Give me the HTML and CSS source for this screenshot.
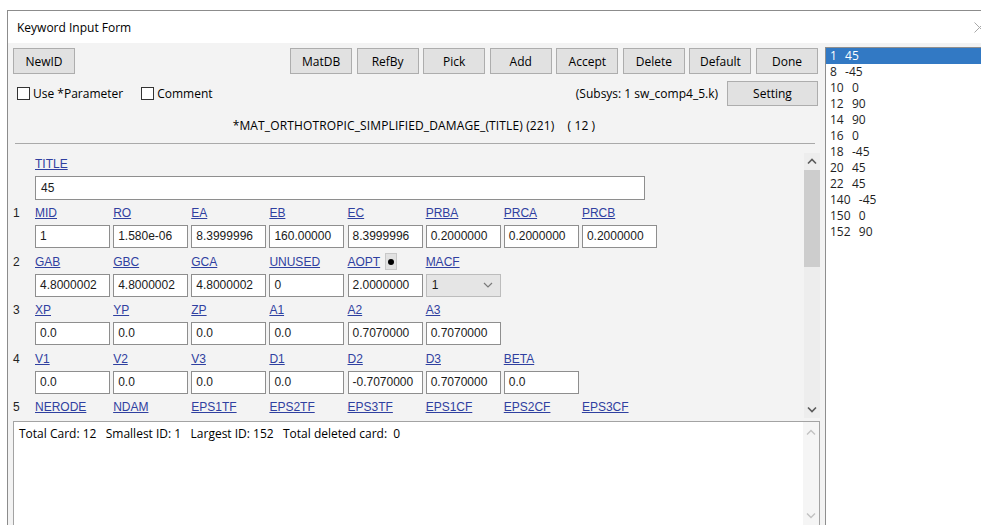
FILE: index.html
```html
<!DOCTYPE html>
<html lang="en">
<head>
<meta charset="utf-8">
<title>Keyword Input Form</title>
<link rel="stylesheet" href="styles.css">
</head>
<body>
<div class="window">
  <div class="titlebar">
    <span class="title">Keyword Input Form</span>
    <svg class="close" width="11" height="11" viewBox="0 0 11 11"><path d="M0.5 0.5 L10.5 10.5 M10.5 0.5 L0.5 10.5" stroke="#a8a8a8" stroke-width="1" fill="none"/></svg>
  </div>
  <div class="body">
    <div class="main">
      <div class="toolbar">
        <button class="btn">NewID</button>
        <div class="tools">
          <button class="btn">MatDB</button>
          <button class="btn">RefBy</button>
          <button class="btn">Pick</button>
          <button class="btn">Add</button>
          <button class="btn">Accept</button>
          <button class="btn">Delete</button>
          <button class="btn">Default</button>
          <button class="btn">Done</button>
        </div>
      </div>
      <div class="optrow">
        <label class="check"><span class="box"></span>Use *Parameter</label>
        <label class="check"><span class="box"></span>Comment</label>
        <span class="subsys">(Subsys: 1 sw_comp4_5.k)</span>
        <button class="btn btn-setting">Setting</button>
      </div>
      <div class="kwtitle">*MAT_ORTHOTROPIC_SIMPLIFIED_DAMAGE_(TITLE) (221)&nbsp;&nbsp;&nbsp;&nbsp;( 12 )</div>
      <div class="sep"></div>

      <div class="cards">
        <div class="cards-body">
          <div class="title-block">
            <div class="lbl">TITLE</div>
            <div class="input title-input">45</div>
          </div>

          <div class="card">
            <div class="num">1</div>
            <div class="fields">
              <div class="field"><div class="lbl">MID</div><div class="input">1</div></div>
              <div class="field"><div class="lbl">RO</div><div class="input">1.580e-06</div></div>
              <div class="field"><div class="lbl">EA</div><div class="input">8.3999996</div></div>
              <div class="field"><div class="lbl">EB</div><div class="input">160.00000</div></div>
              <div class="field"><div class="lbl">EC</div><div class="input">8.3999996</div></div>
              <div class="field"><div class="lbl">PRBA</div><div class="input">0.2000000</div></div>
              <div class="field"><div class="lbl">PRCA</div><div class="input">0.2000000</div></div>
              <div class="field"><div class="lbl">PRCB</div><div class="input">0.2000000</div></div>
            </div>
          </div>

          <div class="card">
            <div class="num">2</div>
            <div class="fields">
              <div class="field"><div class="lbl">GAB</div><div class="input">4.8000002</div></div>
              <div class="field"><div class="lbl">GBC</div><div class="input">4.8000002</div></div>
              <div class="field"><div class="lbl">GCA</div><div class="input">4.8000002</div></div>
              <div class="field"><div class="lbl">UNUSED</div><div class="input">0</div></div>
              <div class="field">
                <div class="lbl-row"><span class="lbl">AOPT</span><span class="mini"><span class="dot"></span></span></div>
                <div class="input">2.0000000</div>
              </div>
              <div class="field">
                <div class="lbl">MACF</div>
                <div class="select"><span>1</span><svg width="10" height="6" viewBox="0 0 10 6"><path d="M1 1 L5 5 L9 1" stroke="#7a7a7a" stroke-width="1.2" fill="none"/></svg></div>
              </div>
            </div>
          </div>

          <div class="card">
            <div class="num">3</div>
            <div class="fields">
              <div class="field"><div class="lbl">XP</div><div class="input">0.0</div></div>
              <div class="field"><div class="lbl">YP</div><div class="input">0.0</div></div>
              <div class="field"><div class="lbl">ZP</div><div class="input">0.0</div></div>
              <div class="field"><div class="lbl">A1</div><div class="input">0.0</div></div>
              <div class="field"><div class="lbl">A2</div><div class="input">0.7070000</div></div>
              <div class="field"><div class="lbl">A3</div><div class="input">0.7070000</div></div>
            </div>
          </div>

          <div class="card">
            <div class="num">4</div>
            <div class="fields">
              <div class="field"><div class="lbl">V1</div><div class="input">0.0</div></div>
              <div class="field"><div class="lbl">V2</div><div class="input">0.0</div></div>
              <div class="field"><div class="lbl">V3</div><div class="input">0.0</div></div>
              <div class="field"><div class="lbl">D1</div><div class="input">0.0</div></div>
              <div class="field"><div class="lbl">D2</div><div class="input">-0.7070000</div></div>
              <div class="field"><div class="lbl">D3</div><div class="input">0.7070000</div></div>
              <div class="field"><div class="lbl">BETA</div><div class="input">0.0</div></div>
            </div>
          </div>

          <div class="card">
            <div class="num">5</div>
            <div class="fields">
              <div class="field"><div class="lbl">NERODE</div><div class="input"></div></div>
              <div class="field"><div class="lbl">NDAM</div><div class="input"></div></div>
              <div class="field"><div class="lbl">EPS1TF</div><div class="input"></div></div>
              <div class="field"><div class="lbl">EPS2TF</div><div class="input"></div></div>
              <div class="field"><div class="lbl">EPS3TF</div><div class="input"></div></div>
              <div class="field"><div class="lbl">EPS1CF</div><div class="input"></div></div>
              <div class="field"><div class="lbl">EPS2CF</div><div class="input"></div></div>
              <div class="field"><div class="lbl">EPS3CF</div><div class="input"></div></div>
            </div>
          </div>
        </div>
        <div class="vscroll">
          <div class="arrow"><svg width="10" height="7" viewBox="0 0 10 7"><path d="M1 5.5 L5 1.5 L9 5.5" stroke="#5a5a5a" stroke-width="1.6" fill="none"/></svg></div>
          <div class="thumb"></div>
          <div class="track"></div>
          <div class="arrow"><svg width="10" height="7" viewBox="0 0 10 7"><path d="M1 1.5 L5 5.5 L9 1.5" stroke="#5a5a5a" stroke-width="1.6" fill="none"/></svg></div>
        </div>
      </div>

      <div class="summary">
        <div class="summary-text">Total Card: 12&nbsp;&nbsp; Smallest ID: 1&nbsp;&nbsp; Largest ID: 152&nbsp;&nbsp; Total deleted card:&nbsp; 0</div>
        <div class="vscroll vscroll-off">
          <div class="arrow"><svg width="10" height="7" viewBox="0 0 10 7"><path d="M1 5.5 L5 1.5 L9 5.5" stroke="#c2c2c2" stroke-width="1.4" fill="none"/></svg></div>
          <div class="track"></div>
          <div class="arrow"><svg width="10" height="7" viewBox="0 0 10 7"><path d="M1 1.5 L5 5.5 L9 1.5" stroke="#c2c2c2" stroke-width="1.4" fill="none"/></svg></div>
        </div>
      </div>
    </div>

    <div class="idlist">
      <div class="item sel">1  45</div>
      <div class="item">8  -45</div>
      <div class="item">10  0</div>
      <div class="item">12  90</div>
      <div class="item">14  90</div>
      <div class="item">16  0</div>
      <div class="item">18  -45</div>
      <div class="item">20  45</div>
      <div class="item">22  45</div>
      <div class="item">140  -45</div>
      <div class="item">150  0</div>
      <div class="item">152  90</div>
    </div>
  </div>
</div>
</body>
</html>
```

FILE: styles.css
```css
html, body {
  margin: 0;
  padding: 0;
}

body {
  width: 981px;
  height: 525px;
  overflow: hidden;
  background: #fff;
  font-family: "Open Sans", "Noto Sans", sans-serif;
  font-size: 12px;
  color: #000;
}

.window {
  margin: 10px 0 0 7px;
  height: 515px;
  border-top: 1px solid #8c8c8c;
  border-left: 1px solid #8c8c8c;
  display: flex;
  flex-direction: column;
}

/* caption strip */
.titlebar {
  height: 32px;
  flex: none;
  display: flex;
  align-items: center;
  padding-left: 9px;
  background: #fff;
}

.close {
  margin-left: auto;
  margin-right: -4px;
}

.body {
  flex: 1;
  display: flex;
  min-height: 0;
  background: #f3f3f3;
}

.main {
  width: 817px;
  flex: none;
  display: flex;
  flex-direction: column;
}

/* buttons */
.btn {
  box-sizing: border-box;
  width: 62px;
  height: 26px;
  padding: 0;
  background: #e1e1e1;
  border: 1px solid #adadad;
  font: inherit;
  color: #000;
}

.toolbar {
  display: flex;
  height: 26px;
  margin: 5px 7px 0 5px;
}

.tools {
  margin-left: auto;
  display: flex;
  gap: 4.57px;
}

.optrow {
  display: flex;
  align-items: center;
  height: 25px;
  margin: 7px 7px 0 9px;
}

.check {
  display: flex;
  align-items: center;
  gap: 3px;
  margin-right: 18px;
}

.box {
  box-sizing: border-box;
  width: 13px;
  height: 13px;
  border: 1px solid #333;
  background: #fff;
}

.subsys {
  margin-left: auto;
  margin-right: 9px;
}

.btn-setting {
  width: 91px;
  height: 25px;
}

.kwtitle {
  margin: 12px 5px 0 0;
  line-height: 16px;
  text-align: center;
  letter-spacing: 0.13px;
}

.sep {
  margin: 9px 10px 0 7px;
  border-top: 1px solid #a9a9a9;
}

/* card editor */
.cards {
  display: flex;
  height: 265px;
  margin: 9px 5px 0 0;
}

.cards-body {
  flex: 1;
  overflow: hidden;
  padding: 3px 0 0 5px;
  font-family: "Liberation Sans", Arial, sans-serif;
  font-size: 12px;
}

.lbl {
  line-height: 16px;
  height: 16px;
  color: #2f40a0;
  text-decoration: underline;
  text-underline-offset: 1px;
  white-space: nowrap;
}

.title-block {
  margin: 0 0 5px 22px;
}

.input {
  box-sizing: border-box;
  height: 23px;
  margin-top: 4px;
  padding-left: 4px;
  border: 1px solid #8e8e8e;
  background: #fff;
  line-height: 21px;
  color: #1a1a1a;
  white-space: nowrap;
  overflow: hidden;
}

.title-input {
  width: 610px;
  height: 24px;
  line-height: 22px;
  padding-left: 5px;
}

.card {
  display: flex;
  margin-bottom: 5.5px;
}

.num {
  width: 22px;
  flex: none;
  line-height: 16px;
  color: #222;
}

.fields {
  display: grid;
  grid-template-columns: repeat(8, 75px);
  column-gap: 3.14px;
}

.lbl-row {
  display: flex;
  align-items: center;
  gap: 5px;
  height: 16px;
}

.mini {
  box-sizing: border-box;
  width: 12px;
  height: 17px;
  background: #e1e1e1;
  border: 1px solid #c8c8c8;
  display: flex;
  align-items: center;
  justify-content: center;
}

.dot {
  width: 6px;
  height: 6px;
  border-radius: 50%;
  background: #000;
}

.select {
  box-sizing: border-box;
  height: 23px;
  margin-top: 4px;
  padding: 0 7px 0 5px;
  background: #e5e5e5;
  border: 1px solid #bcbcbc;
  display: flex;
  align-items: center;
  justify-content: space-between;
  color: #1a1a1a;
}

/* scroll bars */
.vscroll {
  width: 16px;
  flex: none;
  display: flex;
  flex-direction: column;
  background: #ededed;
}

.arrow {
  height: 17px;
  flex: none;
  display: flex;
  align-items: center;
  justify-content: center;
}

.thumb {
  height: 97px;
  flex: none;
  background: #cdcdcd;
}

.track {
  flex: 1;
}

.summary {
  box-sizing: border-box;
  height: 106px;
  margin: 3px 5px 0 5px;
  border: 1px solid #a3a3a3;
  background: #fff;
  display: flex;
}

.summary-text {
  flex: 1;
  padding: 4px 0 0 5px;
  line-height: 16px;
}

.vscroll-off {
  background: #f5f5f5;
}

.vscroll-off .arrow {
  height: 20px;
}

/* id list */
.idlist {
  flex: 1;
  margin-top: 4px;
  border-top: 1px solid #8f8f8f;
  border-left: 1px solid #8f8f8f;
  background: #fff;
}

.item {
  height: 16px;
  line-height: 16px;
  padding-left: 4px;
  white-space: pre;
  word-spacing: 1px;
  color: #1e1e1e;
}

.item.sel {
  background: #3279c4;
  color: #fff;
}
```
